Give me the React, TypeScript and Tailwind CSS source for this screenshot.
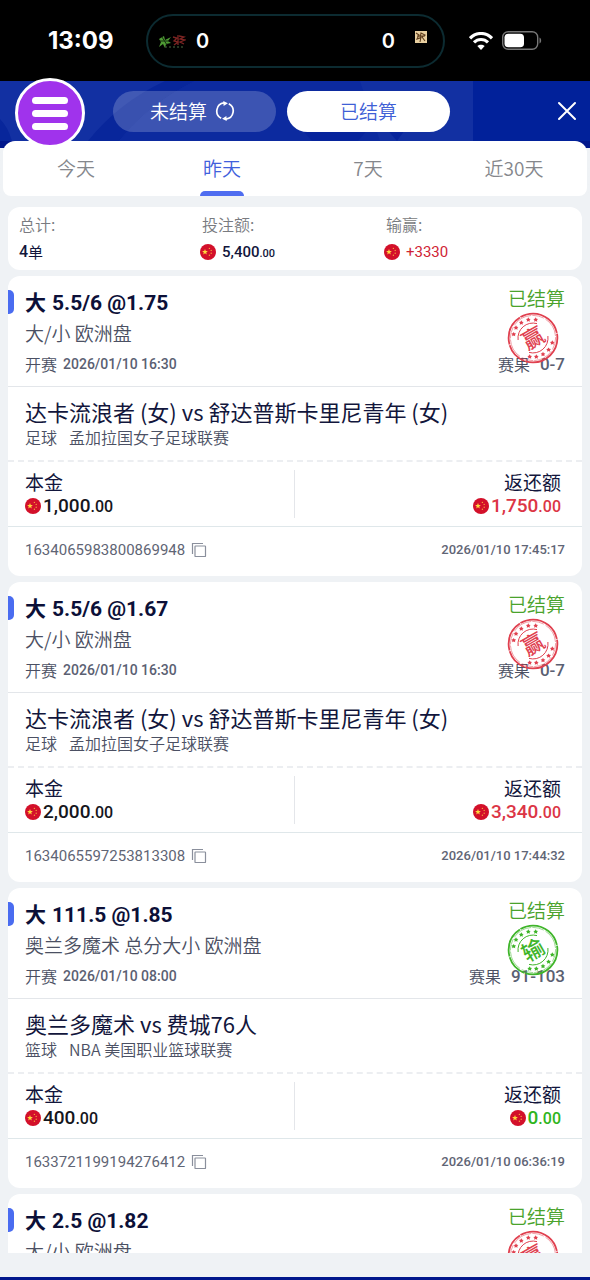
import { useId } from "react";

type Bet = {
  pick: string;
  market: string;
  start?: string;
  score?: string;
  won: boolean;
  details?: {
    teams: string;
    sport: string;
    league: string;
    stake: string;
    payout: string;
    id: string;
    settledAt: string;
  };
};

const bets: Bet[] = [
  {
    pick: "5.5/6 @1.75",
    market: "大/小 欧洲盘",
    start: "2026/01/10 16:30",
    score: "0-7",
    won: true,
    details: {
      teams: "达卡流浪者 (女) vs 舒达普斯卡里尼青年 (女)",
      sport: "足球",
      league: "孟加拉国女子足球联赛",
      stake: "1,000",
      payout: "1,750",
      id: "1634065983800869948",
      settledAt: "2026/01/10 17:45:17",
    },
  },
  {
    pick: "5.5/6 @1.67",
    market: "大/小 欧洲盘",
    start: "2026/01/10 16:30",
    score: "0-7",
    won: true,
    details: {
      teams: "达卡流浪者 (女) vs 舒达普斯卡里尼青年 (女)",
      sport: "足球",
      league: "孟加拉国女子足球联赛",
      stake: "2,000",
      payout: "3,340",
      id: "1634065597253813308",
      settledAt: "2026/01/10 17:44:32",
    },
  },
  {
    pick: "111.5 @1.85",
    market: "奥兰多魔术 总分大小 欧洲盘",
    start: "2026/01/10 08:00",
    score: "91-103",
    won: false,
    details: {
      teams: "奥兰多魔术 vs 费城76人",
      sport: "篮球",
      league: "NBA 美国职业篮球联赛",
      stake: "400",
      payout: "0",
      id: "1633721199194276412",
      settledAt: "2026/01/10 06:36:19",
    },
  },
  { pick: "2.5 @1.82", market: "大/小 欧洲盘", won: true },
];

const tabs = ["今天", "昨天", "7天", "近30天"];

function Flag() {
  return (
    <svg viewBox="0 0 16 16" className="size-4 shrink-0" aria-hidden="true">
      <circle cx="8" cy="8" r="8" fill="#d3102a" />
      <path
        d="M5 5.1l.75 2h2.1L6.2 8.4l.6 2.1L5 9.3l-1.8 1.2.6-2.1L2.1 7.1h2.1z"
        fill="#ffd83d"
      />
      <g fill="#f4a13a">
        <circle cx="9.4" cy="4.4" r=".7" />
        <circle cx="11.2" cy="6.4" r=".7" />
        <circle cx="11.2" cy="9.2" r=".7" />
        <circle cx="9.4" cy="11.3" r=".7" />
      </g>
    </svg>
  );
}

function Stamp({ won }: { won: boolean }) {
  const id = useId();
  const dots = [
    [-19.3, -3.7],
    [-17, -10.3],
    [-11.7, -15.3],
    [-4.7, -18.3],
    [2.7, -18.3],
    [19.3, 4.7],
    [15.6, 11.8],
    [10, 16.2],
    [3.3, 18.7],
    [-3.3, 18.7],
  ];
  const color = won ? "#e0404f" : "#3fb52a";
  return (
    <svg viewBox="-26 -26 52 52" className="size-13" aria-hidden="true">
      <g fill="none" stroke={color}>
        <circle r="24.4" strokeWidth="1.8" strokeDasharray="46 .8 22 .6 31 .7" />
        <circle r="22.6" strokeWidth=".5" strokeDasharray="12 2 20 1" />
        <path d="M-14.9 2A15 15 0 0 1 4-14.4" strokeWidth="1" />
        <path d="M14.9-2A15 15 0 0 1-4 14.4" strokeWidth="1" />
      </g>
      <defs>
        <path
          id={id}
          d="M0-2.400l.8 1.400 1.600.2-1.100 1.200.2 1.600L0 1.300l-1.500.7.2-1.600-1.100-1.200 1.600-.2z"
        />
      </defs>
      {dots.map(([x, y]) => (
        <use key={`${x},${y}`} href={`#${id}`} x={x} y={y} fill={color} />
      ))}
      <text
        transform="rotate(-30)"
        y="8"
        textAnchor="middle"
        fill={color}
        className="font-['Noto_Sans_CJK_SC',sans-serif] text-[22px] font-medium"
      >
        {won ? "赢" : "输"}
      </text>
    </svg>
  );
}

function CopyIcon() {
  return (
    <svg viewBox="0 0 16 16" className="size-4" fill="none" stroke="#8a8f9c" strokeWidth="1.2" aria-hidden="true">
      <path d="M1.5 12V1.5H12" />
      <rect x="4" y="4" width="10.5" height="10.5" rx=".6" />
    </svg>
  );
}

function Money({ value, tone }: { value: string; tone: string }) {
  return (
    <p className={`flex h-6 items-center gap-0.5 font-['Roboto',sans-serif] text-[19px] leading-6 font-medium ${tone}`}>
      <Flag />
      <span>
        {value}
        <span className="text-base leading-none">.00</span>
      </span>
    </p>
  );
}

function BetDetails({ details, won }: { details: NonNullable<Bet["details"]>; won: boolean }) {
  return (
    <>
      <section className="border-b-2 border-dashed border-[#eceef1] px-[17px] pt-2.5 pb-[11px]">
        <h3 className="text-[22px] leading-7 text-[#12163c]">{details.teams}</h3>
        <p className="flex gap-3 text-base leading-6 font-[350] text-[#4b5063]">
          <span>{details.sport}</span>
          <span>{details.league}</span>
        </p>
      </section>
      <section className="grid grid-cols-2 border-b border-[#dfe7ea] py-2 text-[19px] leading-6 text-[#12163c]">
        <div className="border-r border-[#e4e6ea] pl-[17px]">
          <p>本金</p>
          <Money value={details.stake} tone="text-[#15161c]" />
        </div>
        <div className="flex flex-col items-end pr-[21px]">
          <p>返还额</p>
          <Money value={details.payout} tone={won ? "text-[#dc3545]" : "text-[#2fb520]"} />
        </div>
      </section>
      <footer className="flex items-center justify-between px-[17px] pt-[11px] pb-3 font-['Roboto',sans-serif] leading-6 text-[#5f6575]">
        <div className="flex items-center gap-1.5">
          <span className="text-[15px]">{details.id}</span>
          <button type="button" aria-label="复制单号">
            <CopyIcon />
          </button>
        </div>
        <time className="text-[13px] font-medium">{details.settledAt}</time>
      </footer>
    </>
  );
}

function BetCard({ bet }: { bet: Bet }) {
  return (
    <article className="relative min-h-[300px] shrink-0 rounded-xl bg-white">
      <span className="absolute top-3.5 left-0 h-6 w-1.5 rounded-r-[5px] bg-[#4a6cf0]" />
      <section className="flex justify-between border-b border-[#e3e6ea] px-[17px] pt-3 pb-2.5">
        <div className="flex flex-col gap-1.5">
          <h2 className="flex h-[26px] items-baseline gap-1.5 text-[21px] leading-[26px] font-bold text-[#0c1038]">
            大<span className="font-['Roboto',sans-serif] font-bold">{bet.pick}</span>
          </h2>
          <p className="text-[19px] leading-[26px] font-[350] text-[#4b5063]">{bet.market}</p>
          {bet.start && (
            <p className="flex gap-1.5 text-base leading-6 font-[350] text-[#4b5063]">
              开赛
              <span className="font-['Roboto',sans-serif] text-sm leading-6 font-medium text-[#5a6072]">{bet.start}</span>
            </p>
          )}
        </div>
        <div className="relative flex flex-col items-end justify-between">
          <p className="text-[19px] leading-5 font-[350] text-[#4aa32c]">已结算</p>
          {bet.score && (
            <p className="flex gap-2.5 text-base leading-6 font-[350] text-[#4b5063]">
              赛果
              <span className="font-['Roboto',sans-serif] text-[17px] font-medium text-[#5a6072]">{bet.score}</span>
            </p>
          )}
          <div className="absolute top-6 right-1.5">
            <Stamp won={bet.won} />
          </div>
        </div>
      </section>
      {bet.details && <BetDetails details={bet.details} won={bet.won} />}
    </article>
  );
}

function StatusBar() {
  return (
    <div className="flex h-[81px] shrink-0 items-center bg-black pl-12 font-['Inter',sans-serif] text-white">
      <span className="w-[98px] text-2xl font-bold">13:09</span>
      <div className="flex h-[54px] w-[299px] items-center rounded-full border-2 border-[#0c2b31] pr-4 pl-2.5 text-xl font-semibold">
        <svg viewBox="0 0 28 16" className="h-4 w-7" aria-hidden="true">
          <path d="M1 6l5-3 1 4 6-3-3 4 3 2-5 1-1 4-2-4-4 3 2-5z" fill="#4f9a34" />
          <path d="M4 4l5 8M2 8h9" stroke="#14300f" />
          <path d="M15 4l4 1-3 3 4 1-4 3M21 3l5 1-4 2 5 1-5 2 4 2M20 2v10" stroke="#7c2422" strokeWidth="1.3" fill="none" />
          <path d="M7 14h20" stroke="#4d6a42" strokeDasharray="2 2" />
        </svg>
        <span className="ml-2.5 flex-1">0</span>
        <span>0</span>
        <svg viewBox="0 0 12 12" className="mb-2 ml-5 size-3" aria-hidden="true">
          <path d="M0 0h12v12H0z" fill="#e8cfa0" />
          <path d="M1 2l3 2-2 4 3-1 1-5 4 2-3 2 3 4M6 6l-1 5M2 5h8" stroke="#5d3c1c" strokeWidth="1.1" fill="none" />
        </svg>
      </div>
      <svg viewBox="0 0 24 18" className="ml-6 h-[18px] w-6" fill="none" stroke="#fff" strokeWidth="3.2" aria-hidden="true">
        <path d="M1 6.3C7.3-.1 16.7-.1 23 6.3" />
        <path d="M5 10.4c4-3.900 10-3.900 14 0" />
        <path d="M12 18l-3.700-3.900c2.100-1.800 5.300-1.800 7.400 0z" fill="#fff" stroke="none" />
      </svg>
      <svg viewBox="0 0 40 19" className="ml-[9px] h-[19px] w-10" aria-hidden="true">
        <rect x=".7" y=".7" width="35" height="17.6" rx="5.5" fill="none" stroke="#777" strokeWidth="1.4" />
        <rect x="2.5" y="2.7" width="19.5" height="13.6" rx="3.8" fill="#fff" />
        <path d="M37.5 6.500c2.200.8 2.200 5.200 0 6z" fill="#777" />
      </svg>
    </div>
  );
}

function Header() {
  return (
    <header className="relative h-[60px] shrink-0 bg-[#01219a]">
      <svg viewBox="0 0 590 60" preserveAspectRatio="none" className="absolute inset-0 size-full" aria-hidden="true">
        <path d="M0 0h473v60H0z" fill="#1230a2" />
        <path d="M0 38q8 8 12 22H0zM165 0h30Q150 22 119 60H88Q118 22 165 0z" fill="#08269b" />
        <path d="M195 0h165l20 60H119Q150 22 195 0z" fill="#0c2a9f" />
        <path d="M300 46h70l-12 14h-46zM385 46h22l-10 14z" fill="#07249c" />
      </svg>
      <div className="relative flex h-full items-center gap-[11px] pr-3 pl-[113px] text-[19px] font-[350]">
        <button type="button" className="flex h-[41px] w-[163px] items-center justify-center gap-2 rounded-full bg-white/20 pr-1 text-white">
          未结算
          <svg viewBox="0 0 20 20" className="size-5" fill="none" stroke="#fff" strokeWidth="1.7" aria-hidden="true">
            <path d="M6.2 17.300A8.200 8.200 0 0 1 9 1.900" />
            <path d="M13.800 2.700A8.200 8.200 0 0 1 11 18.100" />
            <path d="M8.300 0l4.600 2.300-4.300 2.700zM11.700 20l-4.600-2.300 4.300-2.700z" fill="#fff" stroke="none" />
          </svg>
        </button>
        <button type="button" className="h-[41px] w-[163px] rounded-full bg-white text-[#3f5fd6]">
          已结算
        </button>
        <button type="button" aria-label="关闭" className="ml-auto">
          <svg viewBox="0 0 22 22" className="size-[22px]" stroke="#fff" strokeWidth="2" strokeLinecap="round" aria-hidden="true">
            <path d="M3 3l16 16M19 3L3 19" />
          </svg>
        </button>
      </div>
      <button
        type="button"
        aria-label="菜单"
        className="absolute -top-[3px] left-[15px] z-10 flex size-[70px] flex-col items-center justify-center gap-1.5 rounded-full border-3 border-white bg-[#a033ec]"
      >
        <span className="h-[7px] w-9 rounded-full bg-white" />
        <span className="h-[7px] w-9 rounded-full bg-white" />
        <span className="h-[7px] w-9 rounded-full bg-white" />
      </button>
    </header>
  );
}

export default function App() {
  return (
    <div className="flex h-screen flex-col overflow-hidden border-b-3 border-[#01178c] bg-[#eff2f5] font-['Noto_Sans_CJK_SC',sans-serif]">
      <StatusBar />
      <Header />
      <div className="shrink-0 bg-linear-to-b from-[#01178c] from-12% to-[#eff2f5] to-12%">
        <nav className="mx-[3px] grid h-[55px] grid-cols-4 rounded-t-xl rounded-b-lg bg-white text-[19px] font-[350]">
          {tabs.map((tab, i) => (
            <button
              key={tab}
              type="button"
              className={`relative flex items-center justify-center ${i === 1 ? "text-[#4160dc]" : "text-[#85878c]"}`}
            >
              {tab}
              {i === 1 && <span className="absolute bottom-0 h-[5px] w-11 rounded-t-[5px] bg-[#4f6df0]" />}
            </button>
          ))}
        </nav>
      </div>
      <dl className="mx-2 mt-[11px] grid shrink-0 grid-cols-[183px_184px_1fr] rounded-xl bg-white pt-[5px] pr-3 pb-1 pl-[11px] text-base">
        <div className="flex flex-col gap-0.5">
          <dt className="leading-6 font-[350] text-[#797b80]">总计:</dt>
          <dd className="flex h-7 items-center text-[15px] leading-7 text-[#12163c]">
            <span className="font-['Roboto',sans-serif] text-base leading-7 font-medium">4</span>单
          </dd>
        </div>
        <div className="flex flex-col gap-0.5">
          <dt className="leading-6 font-[350] text-[#797b80]">投注额:</dt>
          <dd className="-ml-0.5 flex h-7 items-center gap-1.5 font-['Roboto',sans-serif] text-[15px] leading-7 font-medium text-[#12163c]">
            <Flag />
            <span>
              5,400<span className="text-[11px] leading-none">.00</span>
            </span>
          </dd>
        </div>
        <div className="flex flex-col gap-0.5">
          <dt className="leading-6 font-[350] text-[#797b80]">输赢:</dt>
          <dd className="-ml-0.5 flex h-7 items-center gap-1.5 font-['Roboto',sans-serif] text-[15px] leading-7 text-[#d02435]">
            <Flag />
            +3330
          </dd>
        </div>
      </dl>
      <main className="mx-2 mt-1.5 mb-6 flex min-h-0 flex-1 flex-col gap-1.5 overflow-hidden">
        {bets.map((bet) => (
          <BetCard key={bet.pick} bet={bet} />
        ))}
      </main>
    </div>
  );
}
